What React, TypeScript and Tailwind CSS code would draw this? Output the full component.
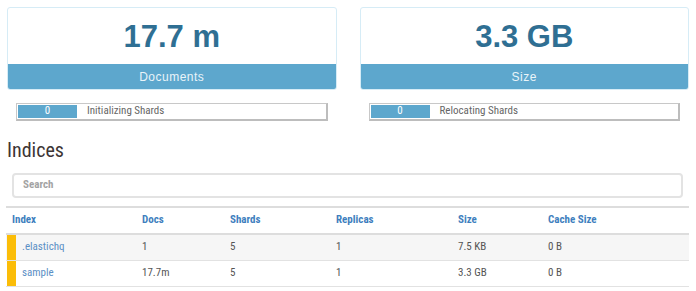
import React from "react";

const cond = "font-['Roboto_Condensed','Liberation_Sans_Narrow',Roboto,sans-serif]";

const stats = [
  { value: "17.7 m", label: "Documents", shards: "Initializing Shards" },
  { value: "3.3 GB", label: "Size", shards: "Relocating Shards" },
];

const rows = [
  { name: ".elastichq", docs: "1", shards: "5", replicas: "1", size: "7.5 KB", cache: "0 B" },
  { name: "sample", docs: "17.7m", shards: "5", replicas: "1", size: "3.3 GB", cache: "0 B" },
];

const cols = ["w-[130px]", "w-[88px]", "w-[106px]", "w-[122px]", "w-[90px]", "flex-1"];

export default function App() {
  return (
    <div className="w-[696px] h-[291px] bg-white overflow-hidden">
      <div className="grid grid-cols-2 gap-[23px] px-[7px] pt-[7px]">
        {stats.map((s) => (
          <div key={s.label}>
            <div className="border border-[#d6ecf6] rounded-[3px] overflow-hidden">
              <div className="h-[56px] flex items-center justify-center font-['Liberation_Sans',Arial,sans-serif] font-bold text-[31px] text-[#2f6f93] pt-[2px]">
                {s.value}
              </div>
              <div className="h-[25px] bg-[#5da7cd] flex items-center justify-center text-[12px] tracking-[0.5px] text-[#e9f4f9] font-['Liberation_Sans',Arial,sans-serif]">
                {s.label}
              </div>
            </div>
            <div className="mt-[13px] mx-[9px] h-[18px] border border-[#c8c8c8] border-b-2 border-r-2 border-b-[#bdbdbd] border-r-[#bdbdbd] flex items-stretch p-[1px]">
              <div className={`w-[59px] bg-[#5da7cd] text-white text-[11px] flex items-center justify-center ${cond}`}>0</div>
              <div className={`pl-[10px] text-[11px] text-[#666] flex items-center ${cond}`}>{s.shards}</div>
            </div>
          </div>
        ))}
      </div>

      <div className={`px-[7px] ${cond}`}>
        <h2 className="mt-[17px] text-[20px] leading-[24px] text-[#3c3434]">Indices</h2>
        <div className="mt-[11px] ml-[5px] mr-[6px] h-[25px] border-2 border-[#e3e3e3] rounded-[4px] flex items-center pl-[9px]">
          <span className="text-[11px] font-bold text-[#a3a3a3]">Search</span>
        </div>
        <div className="mt-[8px] ml-[-1px] w-[683px] text-[11px]">
          <div className="flex h-[29px] items-center border-t-2 border-b-2 border-[#dddddd]">
            {["Index", "Docs", "Shards", "Replicas", "Size", "Cache Size"].map((h, i) => (
              <div key={h} className={`${cols[i]} px-[6px] font-bold text-[#3f7fbe]`}>
                {h}
              </div>
            ))}
          </div>
          {rows.map((r, i) => (
            <div key={r.name} className={`flex h-[26px] items-stretch border-b border-[#e2e2e2] text-[#555] ${i === 0 ? "bg-[#f6f6f6]" : ""}`}>
              <div className={`${cols[0]} flex items-center`}>
                <div className="ml-[1px] w-[9px] self-stretch bg-[#fbbd08]" />
                <span className="pl-[6px] text-[#5b8fc5]">{r.name}</span>
              </div>
              {[r.docs, r.shards, r.replicas, r.size, r.cache].map((v, j) => (
                <div key={j} className={`${cols[j + 1]} px-[6px] flex items-center`}>
                  {v}
                </div>
              ))}
            </div>
          ))}
        </div>
      </div>
    </div>
  );
}
